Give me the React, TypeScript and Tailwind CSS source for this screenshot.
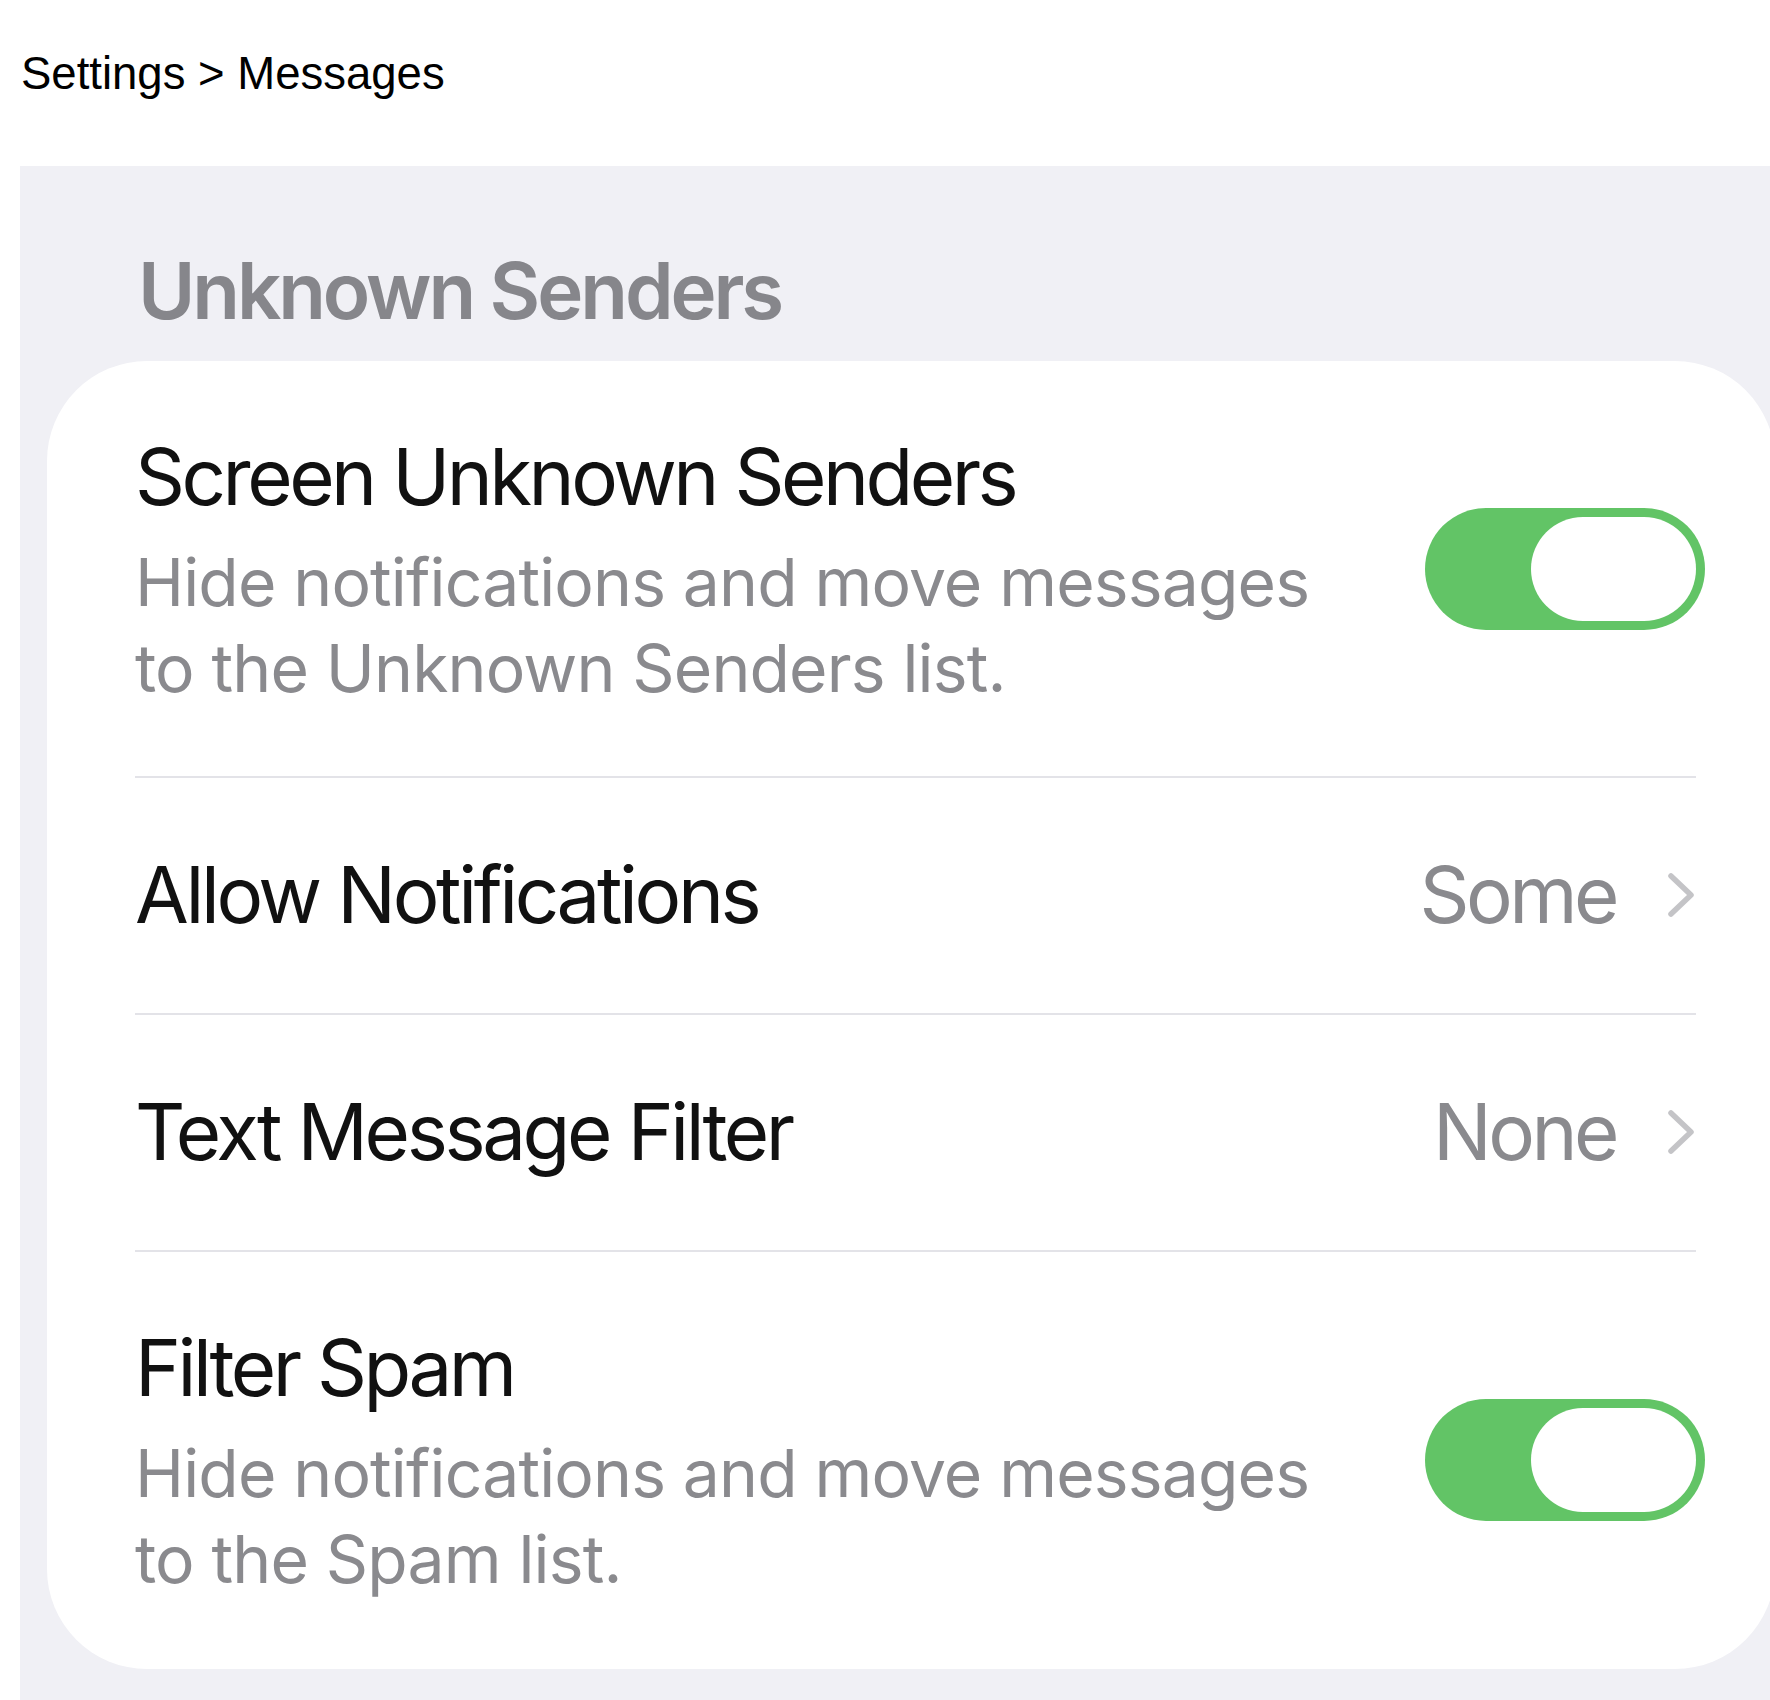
const sf = { fontFamily: "Inter, 'Noto Sans', sans-serif" };

const Toggle = () => (
  <div className="w-[280px] h-[122px] shrink-0 rounded-full bg-[#62c466] flex items-center justify-end pr-[9px]">
    <div className="w-[165px] h-[104px] rounded-full bg-white" />
  </div>
);

const Chevron = () => (
  <svg width="30" height="46" viewBox="0 0 30 46" fill="none" className="shrink-0">
    <polyline points="5,4 25,23 5,42" stroke="#c4c4c7" strokeWidth="5.5" strokeLinecap="round" strokeLinejoin="round" />
  </svg>
);

const ToggleRow = ({ title, lines, last }: { title: string; lines: string[]; last?: boolean }) => (
  <div className={`flex items-center justify-between pt-[77px] ${last ? "pb-[67px]" : "pb-[65px] border-b-2 border-[#e3e3e8]"}`}>
    <div>
      <div className="text-[78px] leading-[78px] text-[#111] tracking-[-3.5px]">{title}</div>
      <div className="mt-[23px] text-[66px] leading-[86px] text-[#8a8a8e] tracking-[-0.85px]">
        {lines.map((l) => (
          <div key={l}>{l}</div>
        ))}
      </div>
    </div>
    <div className="mr-[-9px] mb-[10px]">
      <Toggle />
    </div>
  </div>
);

const LinkRow = ({ title, value }: { title: string; value: string }) => (
  <div className="h-[237px] flex items-center justify-between border-b-2 border-[#e3e3e8]">
    <div className="text-[78px] leading-[78px] text-[#111] tracking-[-3.4px]">{title}</div>
    <div className="flex items-center gap-[50px]">
      <span className="text-[78px] leading-[78px] text-[#8a8a8e] tracking-[-3.5px]">{value}</span>
      <Chevron />
    </div>
  </div>
);

export default function App() {
  return (
    <div className="w-[1770px] h-[1700px] overflow-hidden bg-white">
      <div className="pl-[21px] pt-[51px] text-[45.5px] leading-none text-black" style={{ fontFamily: "'Liberation Sans', Arial, sans-serif" }}>
        Settings &gt; Messages
      </div>
      <div className="ml-[20px] mt-[69px] h-[1600px] bg-[#f0f0f5] pl-[27px] pt-[86px]" style={sf}>
        <div className="pl-[91px] text-[78px] leading-[78px] font-semibold text-[#86868b] tracking-[-3.1px]">
          Unknown Senders
        </div>
        <div className="mt-[31px] mr-[-5px] bg-white rounded-[100px] pl-[88px] pr-[79px]">
          <ToggleRow title="Screen Unknown Senders" lines={["Hide notifications and move messages", "to the Unknown Senders list."]} />
          <LinkRow title="Allow Notifications" value="Some" />
          <LinkRow title="Text Message Filter" value="None" />
          <ToggleRow title="Filter Spam" lines={["Hide notifications and move messages", "to the Spam list."]} last />
        </div>
      </div>
    </div>
  );
}
